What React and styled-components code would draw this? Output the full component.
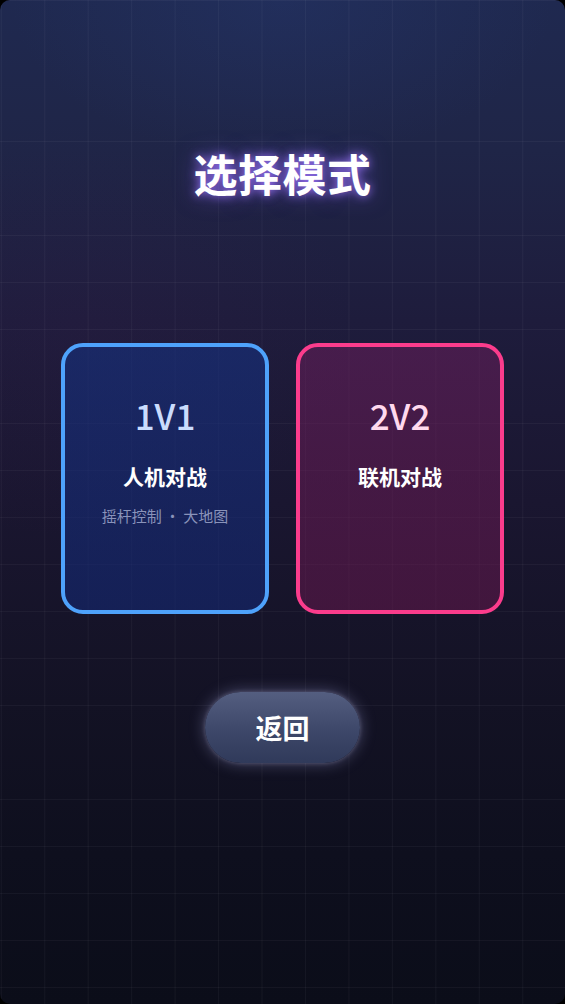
import React from "react";
import styled, { createGlobalStyle } from "styled-components";

const GlobalStyle = createGlobalStyle`
  html, body {
    margin: 0;
    padding: 0;
    background: #000;
  }
  body {
    font-family: "Noto Sans CJK SC", "Noto Sans", sans-serif;
  }
`;

const modes = [
  { id: "1v1", label: "1V1", name: "人机对战", desc: "摇杆控制 · 大地图", tone: "blue" },
  { id: "2v2", label: "2V2", name: "联机对战", desc: "", tone: "pink" },
];

const tones = {
  blue: {
    border: "#4ea2fb",
    bg: "linear-gradient(180deg, rgba(22,48,125,0.62) 0%, rgba(20,40,115,0.6) 100%)",
    label: "#cadcfd",
  },
  pink: {
    border: "#fb3c8c",
    bg: "linear-gradient(180deg, rgba(108,30,92,0.52) 0%, rgba(104,24,78,0.52) 100%)",
    label: "#ffd9ee",
  },
};

function App() {
  return (
    <>
      <GlobalStyle />
      <Screen>
        <Title>选择模式</Title>
        <CardRow>
          {modes.map((m) => (
            <ModeCard key={m.id} $tone={m.tone}>
              <ModeLabel $tone={m.tone}>{m.label}</ModeLabel>
              <ModeName>{m.name}</ModeName>
              {m.desc && <ModeDesc>{m.desc}</ModeDesc>}
            </ModeCard>
          ))}
        </CardRow>
        <BackButton>返回</BackButton>
      </Screen>
    </>
  );
}

const Screen = styled.div`
  position: relative;
  width: 565px;
  height: 1004px;
  box-sizing: border-box;
  padding-top: 147px;
  border-radius: 10px;
  overflow: hidden;
  display: flex;
  flex-direction: column;
  align-items: center;
  background-color: #15132a;
  background-image:
    linear-gradient(rgba(255, 255, 255, 0.04) 1px, transparent 1px),
    linear-gradient(90deg, rgba(255, 255, 255, 0.04) 1px, transparent 1px),
    radial-gradient(ellipse 70% 30% at 15% 33%, rgba(90, 30, 90, 0.07), transparent 70%),
    radial-gradient(ellipse 60% 20% at 50% 0%, rgba(40, 60, 120, 0.3), transparent 80%),
    linear-gradient(180deg, #1f2950 0%, #1f2547 15%, #1e1c3c 32%, #1a1630 50%, #131224 70%, #0e0f1e 85%, #0b0d19 100%);
  background-size: 43.46px 47px, 43.46px 47px, 100% 100%, 100% 100%, 100% 100%;
  background-position: 0 0, 0.8px 0, 0 0, 0 0, 0 0;
`;

const Title = styled.h1`
  margin: 0;
  font-size: 44px;
  line-height: 53px;
  font-weight: 700;
  color: #ffffff;
  letter-spacing: 0.5px;
  text-shadow: 0 0 10px rgba(160, 120, 255, 0.9), 0 0 22px rgba(140, 100, 255, 0.5);
`;

const CardRow = styled.div`
  margin-top: 143px;
  display: flex;
  gap: 27px;
`;

const ModeCard = styled.div`
  width: 208px;
  height: 271px;
  box-sizing: border-box;
  border: 4px solid ${(p) => tones[p.$tone].border};
  border-radius: 22px;
  background: ${(p) => tones[p.$tone].bg};
  display: flex;
  flex-direction: column;
  align-items: center;
  padding-top: 47px;
`;

const ModeLabel = styled.div`
  font-size: 35px;
  line-height: 42px;
  font-weight: 500;
  color: ${(p) => tones[p.$tone].label};
`;

const ModeName = styled.div`
  margin-top: 26px;
  font-size: 21px;
  line-height: 28px;
  font-weight: 700;
  color: #ffffff;
`;

const ModeDesc = styled.div`
  margin-top: 15px;
  font-size: 15px;
  line-height: 21px;
  color: #8a93ba;
  white-space: pre;
`;

const BackButton = styled.button`
  margin-top: 78px;
  width: 155px;
  height: 71px;
  border: none;
  border-radius: 36px;
  background: linear-gradient(180deg, #545e80 0%, #3d4769 55%, #303a5a 100%);
  color: #ffffff;
  font-family: "Noto Sans CJK SC", "Noto Sans", sans-serif;
  font-size: 27px;
  font-weight: 700;
  box-shadow: 0 0 16px rgba(190, 195, 255, 0.35), 0 0 4px rgba(220, 220, 255, 0.25);
  cursor: pointer;
`;

export default App;
